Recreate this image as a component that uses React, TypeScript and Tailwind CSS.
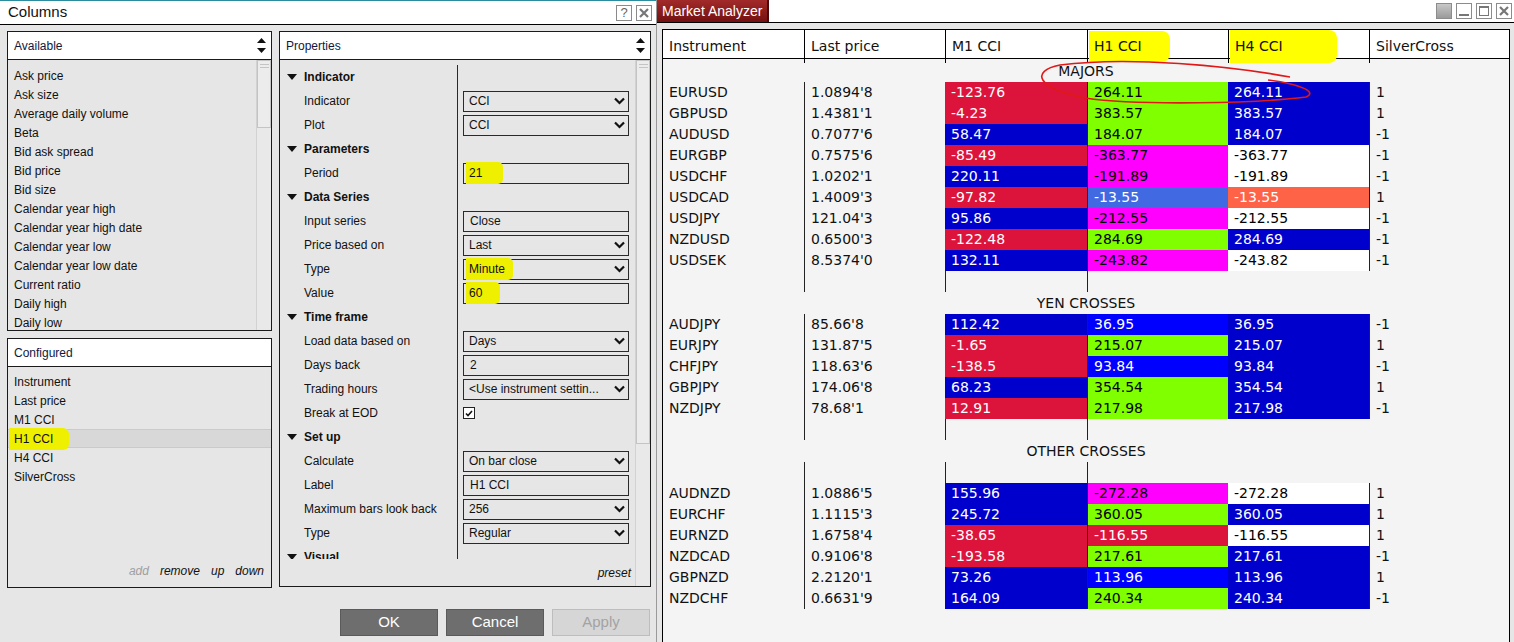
type C = "red" | "blue" | "green" | "mag" | "pure" | "royal" | "tomato" | "white";

const cellColor: Record<C, string> = {
  red: "bg-[#dc143c] text-white",
  blue: "bg-[#0000cd] text-white",
  green: "bg-[#7fff00] text-black",
  mag: "bg-[#ff00ff] text-black",
  pure: "bg-[#0000ff] text-white",
  royal: "bg-[#4169e1] text-white",
  tomato: "bg-[#ff6347] text-white",
  white: "bg-white text-black",
};

type Row = [string, string, string, C, string, C, string, C, string];

const majors: Row[] = [
  ["EURUSD", "1.0894'8", "-123.76", "red", "264.11", "green", "264.11", "blue", "1"],
  ["GBPUSD", "1.4381'1", "-4.23", "red", "383.57", "green", "383.57", "blue", "1"],
  ["AUDUSD", "0.7077'6", "58.47", "blue", "184.07", "green", "184.07", "blue", "-1"],
  ["EURGBP", "0.7575'6", "-85.49", "red", "-363.77", "mag", "-363.77", "white", "-1"],
  ["USDCHF", "1.0202'1", "220.11", "blue", "-191.89", "mag", "-191.89", "white", "-1"],
  ["USDCAD", "1.4009'3", "-97.82", "red", "-13.55", "royal", "-13.55", "tomato", "1"],
  ["USDJPY", "121.04'3", "95.86", "blue", "-212.55", "mag", "-212.55", "white", "-1"],
  ["NZDUSD", "0.6500'3", "-122.48", "red", "284.69", "green", "284.69", "blue", "-1"],
  ["USDSEK", "8.5374'0", "132.11", "blue", "-243.82", "mag", "-243.82", "white", "-1"],
];

const yen: Row[] = [
  ["AUDJPY", "85.66'8", "112.42", "blue", "36.95", "pure", "36.95", "blue", "-1"],
  ["EURJPY", "131.87'5", "-1.65", "red", "215.07", "green", "215.07", "blue", "1"],
  ["CHFJPY", "118.63'6", "-138.5", "red", "93.84", "pure", "93.84", "blue", "-1"],
  ["GBPJPY", "174.06'8", "68.23", "blue", "354.54", "green", "354.54", "blue", "1"],
  ["NZDJPY", "78.68'1", "12.91", "red", "217.98", "green", "217.98", "blue", "-1"],
];

const others: Row[] = [
  ["AUDNZD", "1.0886'5", "155.96", "blue", "-272.28", "mag", "-272.28", "white", "1"],
  ["EURCHF", "1.1115'3", "245.72", "blue", "360.05", "green", "360.05", "blue", "1"],
  ["EURNZD", "1.6758'4", "-38.65", "red", "-116.55", "red", "-116.55", "white", "1"],
  ["NZDCAD", "0.9106'8", "-193.58", "red", "217.61", "green", "217.61", "blue", "-1"],
  ["GBPNZD", "2.2120'1", "73.26", "blue", "113.96", "pure", "113.96", "blue", "1"],
  ["NZDCHF", "0.6631'9", "164.09", "blue", "240.34", "green", "240.34", "blue", "-1"],
];

const available = [
  "Ask price", "Ask size", "Average daily volume", "Beta", "Bid ask spread", "Bid price", "Bid size",
  "Calendar year high", "Calendar year high date", "Calendar year low", "Calendar year low date",
  "Current ratio", "Daily high", "Daily low",
];

type Prop = { sec?: string; l?: string; v?: string; sel?: boolean; hl?: string; chk?: boolean };

const props: Prop[] = [
  { sec: "Indicator" },
  { l: "Indicator", v: "CCI", sel: true },
  { l: "Plot", v: "CCI", sel: true },
  { sec: "Parameters" },
  { l: "Period", v: "21", hl: "pr-[21px]" },
  { sec: "Data Series" },
  { l: "Input series", v: "Close" },
  { l: "Price based on", v: "Last", sel: true },
  { l: "Type", v: "Minute", sel: true, hl: "pr-[8px]" },
  { l: "Value", v: "60", hl: "pr-[18px]" },
  { sec: "Time frame" },
  { l: "Load data based on", v: "Days", sel: true },
  { l: "Days back", v: "2" },
  { l: "Trading hours", v: "<Use instrument settin...", sel: true },
  { l: "Break at EOD", chk: true },
  { sec: "Set up" },
  { l: "Calculate", v: "On bar close", sel: true },
  { l: "Label", v: "H1 CCI" },
  { l: "Maximum bars look back", v: "256", sel: true },
  { l: "Type", v: "Regular", sel: true },
  { sec: "Visual" },
];

function UpDown() {
  return (
    <div className="flex flex-col gap-[5px] items-center">
      <svg width="9" height="5" viewBox="0 0 9 5"><path d="M0 5 L4.5 0 L9 5 Z" fill="#111" /></svg>
      <svg width="9" height="5" viewBox="0 0 9 5"><path d="M0 0 L4.5 5 L9 0 Z" fill="#111" /></svg>
    </div>
  );
}

function Scrollbar({ thumb }: { thumb: string }) {
  return (
    <div className="w-[15px] shrink-0 bg-[#e9e9e9] border-l border-[#d2d2d2]">
      <div className={`${thumb} border border-[#c4c4c4] bg-[#ececec] flex flex-col items-center pt-[3px] gap-[2px]`}>
        <div className="w-[9px] h-px bg-[#c4c4c4]" />
        <div className="w-[9px] h-px bg-[#c4c4c4]" />
      </div>
    </div>
  );
}

function BoxHeader({ title }: { title: string }) {
  return (
    <div className="flex items-center justify-between h-[28px] bg-white border-b border-[#1a1a1a] pl-[6px] pr-[5px] text-[12px] text-[#101840]">
      <span>{title}</span>
      {title !== "Configured" && <UpDown />}
    </div>
  );
}

function Chevron() {
  return (
    <svg width="11" height="8" viewBox="0 0 11 8">
      <path d="M1 1.5 L5.5 6 L10 1.5" fill="none" stroke="#111" strokeWidth="2.2" />
    </svg>
  );
}

function Properties() {
  return (
    <div className="flex flex-col w-[372px] h-[556px] border border-[#1a1a1a]">
      <BoxHeader title="Properties" />
      <div className="flex flex-1">
        <div className="flex flex-col flex-1">
          <div className="h-[499px] overflow-hidden pt-[5px]">
            {props.map((p, i) => (
              <div key={i} className="flex h-[24px] text-[12px]">
                <div className="w-[178px] shrink-0 border-r border-[#2a2a2a] flex items-center">
                  {p.sec ? (
                    <div className="flex items-center gap-[7px] pl-[7px] font-bold">
                      <svg width="10" height="6" viewBox="0 0 10 6"><path d="M0 0 L5 6 L10 0 Z" fill="#111" /></svg>
                      <span>{p.sec}</span>
                    </div>
                  ) : (
                    <span className="pl-[24px]">{p.l}</span>
                  )}
                </div>
                <div className="flex items-center pl-[5px]">
                  {p.chk && (
                    <div className="w-[12px] h-[12px] border border-[#222] bg-white flex items-center justify-center">
                      <svg width="8" height="7" viewBox="0 0 8 7"><path d="M1 3.5 L3 5.5 L7 1" fill="none" stroke="#111" strokeWidth="1.6" /></svg>
                    </div>
                  )}
                  {p.v && (
                    <div className="flex items-center justify-between w-[166px] h-[21px] border border-[#2a2a2a] bg-[#e6e6e6] pl-[5px] pr-[3px]">
                      {p.hl ? (
                        <span className={`bg-[#eef000] -ml-[3px] pl-[3px] py-[2px] rounded-r-[5px] ${p.hl}`}>{p.v}</span>
                      ) : (
                        <span className={p.sel ? "" : "pl-px"}>{p.v}</span>
                      )}
                      {p.sel && <Chevron />}
                    </div>
                  )}
                </div>
              </div>
            ))}
          </div>
          <div className="flex-1 flex items-center justify-end pr-[4px] text-[12px] italic text-[#111]">preset</div>
        </div>
        <Scrollbar thumb="h-[384px]" />
      </div>
    </div>
  );
}

function ColumnsDialog() {
  return (
    <div className="flex flex-col w-[657px] h-full shrink-0 border-r border-[#9a9a9a] font-['Liberation_Sans',Arial,sans-serif] text-[#111]">
      <div className="flex items-center justify-between h-[25px] bg-white border-t border-t-[#2a8c9e] border-b border-b-black pl-[8px] pr-[4px]">
        <span className="text-[15px]">Columns</span>
        <div className="flex gap-[4px]">
          <div className="w-[16px] h-[16px] border border-[#8a8a8a] bg-white flex items-center justify-center text-[13px] leading-none text-[#666]">?</div>
          <div className="w-[16px] h-[16px] border border-[#8a8a8a] bg-white flex items-center justify-center">
            <svg width="10" height="10" viewBox="0 0 10 10"><path d="M1 1 L9 9 M9 1 L1 9" stroke="#777" strokeWidth="2.2" /></svg>
          </div>
        </div>
      </div>
      <div className="flex-1 bg-[#e6e6e6] pt-[6px] pl-[7px] pr-[5px]">
        <div className="flex gap-[7px]">
          <div className="flex flex-col gap-[7px] w-[265px]">
            <div className="flex flex-col h-[300px] border border-[#1a1a1a]">
              <BoxHeader title="Available" />
              <div className="flex flex-1 overflow-hidden">
                <div className="flex-1 pt-[6px] text-[12px]">
                  {available.map((a) => (
                    <div key={a} className="h-[19px] flex items-center pl-[6px]">{a}</div>
                  ))}
                </div>
                <Scrollbar thumb="h-[68px]" />
              </div>
            </div>
            <div className="flex flex-col h-[250px] border border-[#1a1a1a]">
              <BoxHeader title="Configured" />
              <div className="flex-1 pt-[5px] text-[12px]">
                {["Instrument", "Last price", "M1 CCI", "H1 CCI", "H4 CCI", "SilverCross"].map((c) => (
                  <div
                    key={c}
                    className={`h-[19px] flex items-center pl-[6px] ${c === "H1 CCI" ? "bg-[#d8d8d8] border-y border-[#cacaca]" : ""}`}
                  >
                    {c === "H1 CCI" ? (
                      <span className="bg-[#eef000] -ml-[5px] pl-[5px] pr-[16px] py-[2px] rounded-r-[6px]">{c}</span>
                    ) : (
                      c
                    )}
                  </div>
                ))}
              </div>
              <div className="flex justify-end gap-[11px] pr-[7px] pb-[7px] text-[12px] italic">
                <span className="text-[#a0a0a0]">add</span>
                <span>remove</span>
                <span>up</span>
                <span>down</span>
              </div>
            </div>
          </div>
          <Properties />
        </div>
        <div className="flex justify-end gap-[8px] mt-[21px] mr-[1px] text-[15px]">
          <div className="w-[98px] h-[27px] bg-[#6e6e6e] border border-[#5a5a5a] text-white flex items-center justify-center">OK</div>
          <div className="w-[98px] h-[27px] bg-[#6e6e6e] border border-[#5a5a5a] text-white flex items-center justify-center">Cancel</div>
          <div className="w-[98px] h-[27px] bg-[#d6d6d6] border border-[#bdbdbd] text-[#a3a3a3] flex items-center justify-center">Apply</div>
        </div>
      </div>
    </div>
  );
}

const grid = "grid grid-cols-[141px_141px_142px_141px_141px_1fr]";

function DataRow({ r }: { r: Row }) {
  return (
    <div className={`${grid} h-[21px] text-[14px]`}>
      <div className="flex items-center pl-[6px]">{r[0]}</div>
      <div className="flex items-center pl-[6px] border-l border-[#222]">{r[1]}</div>
      <div className={`flex items-center pl-[6px] ${cellColor[r[3]]}`}>{r[2]}</div>
      <div className={`flex items-center pl-[6px] border-l border-[#222] ${cellColor[r[5]]}`}>{r[4]}</div>
      <div className={`flex items-center pl-[6px] ${cellColor[r[7]]}`}>{r[6]}</div>
      <div className="flex items-center pl-[6px] border-l border-[#222]">{r[8]}</div>
    </div>
  );
}

function EmptyRow() {
  return (
    <div className={`${grid} h-[21px]`}>
      <div />
      <div className="border-l border-[#222]" />
      <div className="border-l border-[#222]" />
      <div className="border-l border-[#222]" />
      <div />
      <div />
    </div>
  );
}

function SectionRow({ title }: { title: string }) {
  return <div className="h-[22px] flex items-center justify-center text-[14px]">{title}</div>;
}

function WinBtn({ children, filled }: { children?: React.ReactNode; filled?: boolean }) {
  return (
    <div
      className={`w-[16px] h-[16px] border border-[#8c8c8c] flex items-center justify-center ${filled ? "bg-gradient-to-b from-[#c8c8c8] to-[#9a9a9a]" : "bg-white"}`}
    >
      {children}
    </div>
  );
}

function MarketAnalyzer() {
  return (
    <div className="flex flex-col flex-1 h-full font-['DejaVu_Sans',Verdana,sans-serif] text-[#111]">
      <div className="flex items-start justify-between h-[23px] bg-white border-b border-black">
        <div className="h-[22px] w-[112px] flex items-center pl-[5px] bg-gradient-to-b from-[#a22a2a] to-[#741010] border-r-2 border-[#4a0808] text-white text-[14px] font-['Liberation_Sans',Arial,sans-serif]">
          Market Analyzer
        </div>
        <div className="flex gap-[4px] pt-[3px] pr-[2px]">
          <WinBtn filled />
          <WinBtn>
            <div className="w-[10px] h-[2px] bg-[#777] mt-[8px]" />
          </WinBtn>
          <WinBtn>
            <div className="w-[10px] h-[10px] border border-[#777] border-t-2" />
          </WinBtn>
          <WinBtn>
            <svg width="10" height="10" viewBox="0 0 10 10"><path d="M1 1 L9 9 M9 1 L1 9" stroke="#777" strokeWidth="2.2" /></svg>
          </WinBtn>
        </div>
      </div>
      <div className="flex flex-col flex-1 bg-[#e6e6e6] pt-[6px] pl-[5px] pr-[4px]">
        <div className="flex-1 border border-b-0 border-black bg-[#f4f4f4]">
          <div className={`${grid} h-[29px] bg-white border-b border-black text-[14px]`}>
            <div className="flex items-center pl-[6px]">Instrument</div>
            <div className="flex items-center pl-[6px] border-l border-black">Last price</div>
            <div className="flex items-center pl-[6px] border-l border-black">M1 CCI</div>
            <div className="flex items-center pl-px border-l border-black">
              <span className="bg-[#ffff00] pl-[5px] pr-[28px] py-[5px] rounded-r-[8px]">H1 CCI</span>
            </div>
            <div className="flex items-center pl-px border-l border-black">
              <span className="bg-[#ffff00] pl-[5px] pr-[54px] py-[6px] rounded-r-[8px]">H4 CCI</span>
            </div>
            <div className="flex items-center pl-[6px] border-l border-black">SilverCross</div>
          </div>
          <div className="pt-px">
            <SectionRow title="MAJORS" />
            {majors.map((r) => <DataRow key={r[0]} r={r} />)}
            <EmptyRow />
            <SectionRow title="YEN CROSSES" />
            {yen.map((r) => <DataRow key={r[0]} r={r} />)}
            <EmptyRow />
            <SectionRow title="OTHER CROSSES" />
            <EmptyRow />
            {others.map((r) => <DataRow key={r[0]} r={r} />)}
          </div>
        </div>
      </div>
    </div>
  );
}

export default function App() {
  return (
    <div className="relative flex w-[1514px] h-[642px] overflow-hidden bg-white">
      <ColumnsDialog />
      <MarketAnalyzer />
      {/* hand-drawn red circle around the MAJORS header */}
      <svg className="absolute inset-0 pointer-events-none" width="1514" height="642" viewBox="0 0 1514 642">
        <path
          d="M1290 77 C1230 66 1130 56 1060 65 C1030 71 1036 88 1085 98 C1140 106 1260 103 1306 97 C1318 92 1300 84 1268 80"
          fill="none"
          stroke="#e01818"
          strokeWidth="1.6"
        />
      </svg>
    </div>
  );
}
